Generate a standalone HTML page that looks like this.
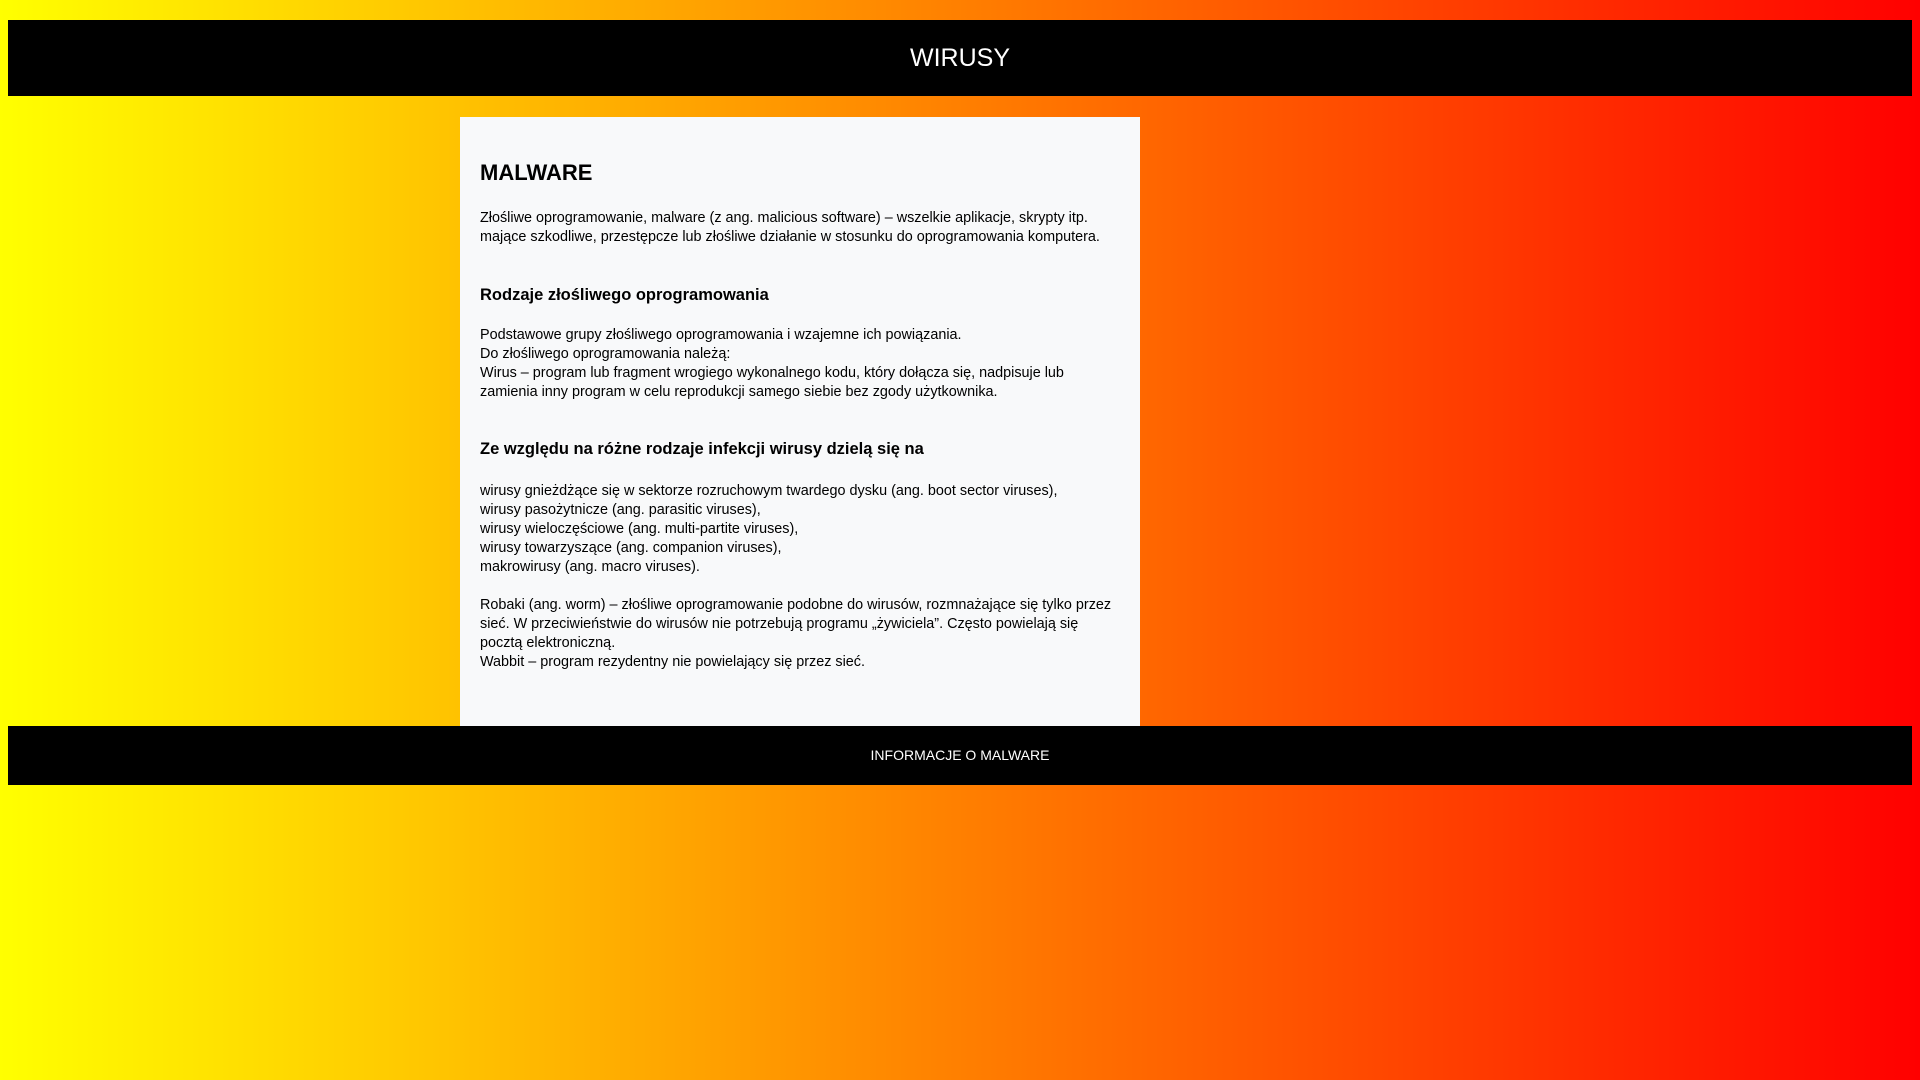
<!DOCTYPE html>
<html><head><meta charset="utf-8"><style>
body{margin:0;width:1920px;height:1080px;background:linear-gradient(to right,#ffff00,#ff0000);font-family:"Liberation Sans",sans-serif;position:relative;overflow:hidden}
.hdr{position:absolute;left:8px;top:20px;width:1904px;height:76px;background:#000;color:#fff;text-align:center;line-height:76px;font-size:25px}
.panel{position:absolute;left:460px;top:117px;width:680px;height:609px;background:#f8f9fa}
.ftr{position:absolute;left:8px;top:726px;width:1904px;height:59px;background:#000;color:#fff;text-align:center;line-height:59px;font-size:14px}
.t{position:absolute;left:20px;color:#000;font-size:14.4px;line-height:19.1px;white-space:nowrap}
h1,h2{margin:0;position:absolute;left:20px;white-space:nowrap}
h1{font-size:22px;top:43px}
h2{font-size:16.5px}
</style></head><body>
<div class="hdr">WIRUSY</div>
<div class="panel">
<h1>MALWARE</h1>
<div class="t" style="top:91.5px">Złośliwe oprogramowanie, malware (z ang. malicious software) – wszelkie aplikacje, skrypty itp.<br>mające szkodliwe, przestępcze lub złośliwe działanie w stosunku do oprogramowania komputera.</div>
<h2 style="top:168.5px">Rodzaje złośliwego oprogramowania</h2>
<div class="t" style="top:208.5px">Podstawowe grupy złośliwego oprogramowania i wzajemne ich powiązania.<br>Do złośliwego oprogramowania należą:<br>Wirus – program lub fragment wrogiego wykonalnego kodu, który dołącza się, nadpisuje lub<br>zamienia inny program w celu reprodukcji samego siebie bez zgody użytkownika.</div>
<h2 style="top:322.5px">Ze względu na różne rodzaje infekcji wirusy dzielą się na</h2>
<div class="t" style="top:364.5px">wirusy gnieżdżące się w sektorze rozruchowym twardego dysku (ang. boot sector viruses),<br>wirusy pasożytnicze (ang. parasitic viruses),<br>wirusy wieloczęściowe (ang. multi-partite viruses),<br>wirusy towarzyszące (ang. companion viruses),<br>makrowirusy (ang. macro viruses).</div>
<div class="t" style="top:478.5px">Robaki (ang. worm) – złośliwe oprogramowanie podobne do wirusów, rozmnażające się tylko przez<br>sieć. W przeciwieństwie do wirusów nie potrzebują programu „żywiciela”. Często powielają się<br>pocztą elektroniczną.<br>Wabbit – program rezydentny nie powielający się przez sieć.</div>
</div>
<div class="ftr">INFORMACJE O MALWARE</div>
</body></html>
